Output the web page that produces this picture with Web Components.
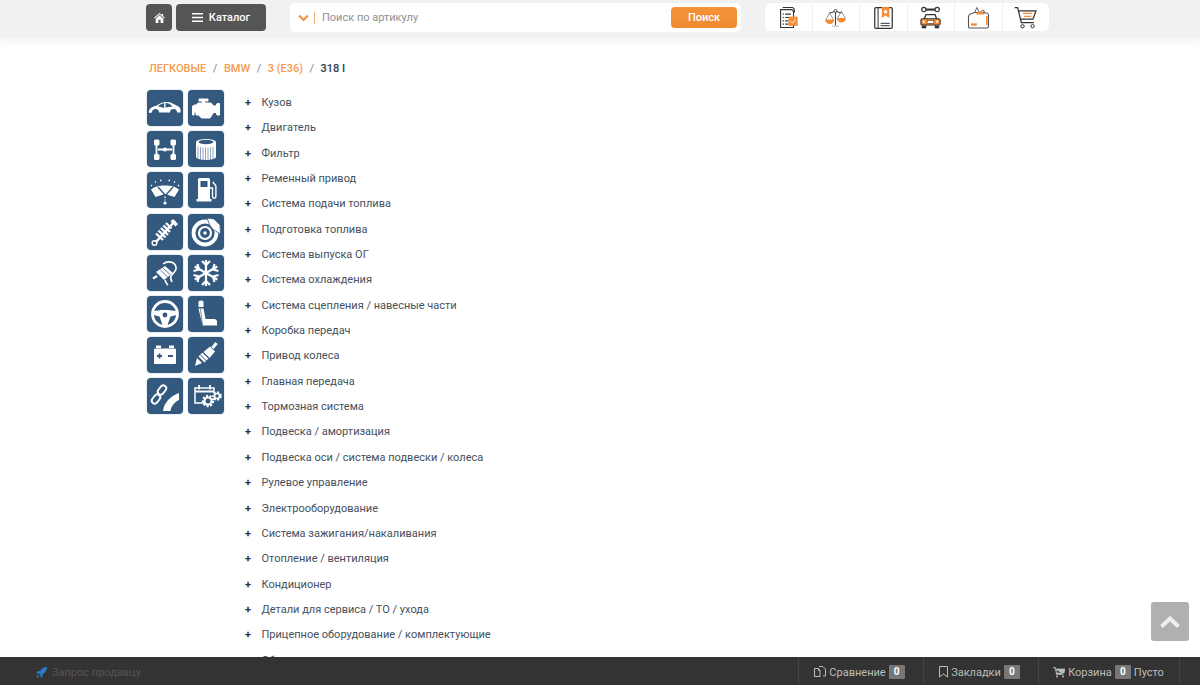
<!DOCTYPE html>
<html lang="ru">
<head>
<meta charset="utf-8">
<title>Каталог</title>
<style>
  html, body { margin: 0; height: 685px; overflow: hidden; background: #fff; font-family: Roboto, sans-serif; }
</style>
</head>
<body>
<site-header></site-header>
<main-page>
  <bread-crumbs></bread-crumbs>
  <category-tiles></category-tiles>
  <parts-list></parts-list>
</main-page>
<scroll-top></scroll-top>
<bottom-bar></bottom-bar>

<script>
const ORANGE = '#f48d37';

// top toolbar icons, 30x30
const TOOL_ICONS = {
  list: `<path d="M8 3h12l2 2v4M5.500 5.500H19l2 2V27H5.500z" fill="#fff" stroke="#333" stroke-width="1.300"/><path d="M8 11h1.500M11 11h7M8 15h1.500M11 15h5M8 19h1.500M11 19h4M8 23h1.500M11 23h4" stroke="#333" stroke-width="1.400"/><rect x="15" y="14" width="11" height="11" fill="${ORANGE}"/><path d="M17.500 19.500l2.300 2.300 4-4.800" stroke="#fff" stroke-width="1" fill="none"/>`,
  scales: `<path d="M15 7v17M8 9.500l7-2 7 2" stroke="#444" stroke-width="1.300" fill="none"/><circle cx="15" cy="7" r="1.700" fill="#fff" stroke="#333"/><path d="M8 9.500l-4.500 8M8 9.500l4.500 8M22 7.500l-4.500 8M22 7.500l4.500 8" stroke="#444" stroke-width=".7"/><path d="M2.500 17.500h11a5.500 5.500 0 0 1-11 0zM16.500 15.500h11a5.500 5.500 0 0 1-11 0z" fill="${ORANGE}"/><path d="M11 24.500h8v1.500h-8z" fill="#bbb"/>`,
  book: `<rect x="4.500" y="3" width="21" height="25" rx="1.500" fill="#fff" stroke="#333" stroke-width="1.500"/><path d="M8.500 3v25M11.500 22h11M11.500 24.800h11" stroke="#333" stroke-width="1.200"/><path d="M13 2.500h9v13l-4.500-3-4.500 3z" fill="${ORANGE}"/><path d="M17.500 5l.9 1.900 2 .2-1.500 1.400.4 2-1.800-1-1.800 1 .4-2-1.500-1.400 2-.2z" fill="#fff"/>`,
  car: `<path d="M9 5.500h12" stroke="#333" stroke-width="2.500"/><circle cx="7" cy="5.500" r="2.600" fill="#fff" stroke="#333" stroke-width="1.400"/><circle cx="23" cy="5.500" r="2.600" fill="#fff" stroke="#333" stroke-width="1.400"/><path d="M7.500 17l2-5.500h11l2 5.500" fill="#fff" stroke="#333" stroke-width="1.500"/><rect x="3.500" y="16.500" width="23" height="7.500" rx="1.500" fill="${ORANGE}" stroke="#333" stroke-width="1.300"/><rect x="11" y="18.500" width="8" height="3.500" fill="#fff" stroke="#333" stroke-width=".6"/><path d="M5 24.500v3h4.500v-3M20.500 24.500v3H25v-3" fill="#333" stroke="#333"/><circle cx="7" cy="20" r="1.300" fill="#fff"/><circle cx="23" cy="20" r="1.300" fill="#fff"/>`,
  box: `<path d="M10 10l3-7 3 6M16 9l5-3 2 5" stroke="#666" stroke-width="1.200" fill="none"/><path d="M3 14q0-2 2-3l5-2h10q7 0 7 3v14q0 1.500-1.500 1.500h-21Q3 27.500 3 26z" fill="#fff" stroke="#555" stroke-width="1.300"/><path d="M13 9.500q4-4 8 0l1.500 2H12z" fill="${ORANGE}"/><rect x="6" y="22" width="7" height="2.800" fill="${ORANGE}"/><rect x="24" y="13" width="2" height="11" fill="${ORANGE}"/>`,
  cart: `<path d="M2 3h3.500l4.500 18h15M6.500 7h21l-3.500 10H9.500" fill="#fff" stroke="#333" stroke-width="1.500"/><path d="M12 10h11M13 13.500h9" stroke="${ORANGE}" stroke-width="1.500"/><circle cx="11.500" cy="25.500" r="2" fill="none" stroke="#333" stroke-width="1.200"/><circle cx="23.500" cy="25.500" r="2" fill="none" stroke="#333" stroke-width="1.200"/>`
};

// category tile icons, 36x36, white on blue
const B = '#33597f';
const TILE_ICONS = {
  car: `<path d="M2 23c-.5-4 2-6 8-7.500 3-2.500 7-4 11-3.500 3.500.5 6 2.500 8.500 3.500 3 1 4.500 3 4 7h-3.500a3.500 3.500 0 0 0-7 0H12a3.500 3.500 0 0 0-7 0z" fill="#fff"/><path d="M11 16.200c2-1.800 4.200-2.800 6.300-3l-.2 4.800zM18.600 13c3 0 5.300 1.600 7 3.600l-7.100 1z" fill="${B}"/>`,
  engine: `<path d="M6 15h2.500l1.500-2h4.500v-2H11V9h9v2h-3.500v2H23l2.500 3H28l1-2.500h2.500V25H29l-1-2.500h-2.500L22 28H13.500L10.500 25H8v-3H6v3H4.500v-9H6z" fill="#fff" stroke="#fff" stroke-linejoin="round"/>`,
  chassis: `<g fill="none" stroke="#fff"><path d="M9.500 11v15M26.500 11v15M11 18.500h14" stroke-width="1.800"/><rect x="7.500" y="9" width="4.500" height="5" rx=".5" fill="#fff" stroke-width="1"/><rect x="24" y="9" width="4.500" height="5" rx=".5" fill="#fff" stroke-width="1"/><rect x="7.500" y="23.500" width="4.500" height="5" rx=".5" fill="#fff" stroke-width="1"/><rect x="24" y="23.500" width="4.500" height="5" rx=".5" fill="#fff" stroke-width="1"/></g><circle cx="18" cy="18.500" r="2" fill="#fff"/>`,
  filter: `<path d="M8 11c1-4 19-4 20 0v15c-1 4-19 4-20 0z" fill="#fff"/><ellipse cx="18" cy="11" rx="7.500" ry="2.200" fill="${B}"/><path d="M10 15.500v12M12.500 16v12.500M15 16.500v12.500M17.500 16.500V29M20 16.500V29M22.500 16.500V29M25 16v12.500" stroke="${B}" stroke-opacity=".55" stroke-width="1"/>`,
  wiper: `<path d="M4 17.500C10 12 26 12 32 17.500l-4.500 7.500-9.500-3-9.500 3z" fill="#fff"/><path d="M18 23l-7-8M19 23l7-8" stroke="${B}" stroke-width="1.400"/><path d="M4 14l1-1M8 10.500l1-1M13 8.500h1.500M21.500 8.500H23M27 9.500l1 1M31 13l1 1M18 24.500v1.500M18 27.500v1" stroke="#fff" stroke-width="1.300"/><circle cx="18" cy="31" r="1.600" fill="#fff"/>`,
  fuel: `<path d="M10 7.500q0-1.500 1.500-1.500h9Q22 6 22 7.500V27h1.500v2.500h-15V27H10z" fill="#fff"/><rect x="12.500" y="9" width="7" height="6" fill="${B}"/><path d="M22 16h2.500v8.500a1.700 1.700 0 0 0 3.400 0V14l-3-4" fill="none" stroke="#fff" stroke-width="1.400"/>`,
  shock: `<path d="M8 29L28 7" stroke="#fff" stroke-width="2.500"/><circle cx="7.500" cy="29" r="2.300" fill="${B}" stroke="#fff" stroke-width="1.500"/><path d="M26 5l5 5-2.500 2.500-5-5z" fill="#fff"/><path d="M9 19.500l7 6.500M11.500 16.500l7 7M14 14l7 7M16.500 11.500l6.500 6.500M19 9l5.500 5.500" stroke="#fff" stroke-width="2.300"/>`,
  brake: `<circle cx="17" cy="19" r="11.500" fill="none" stroke="#fff" stroke-width="3.800"/><circle cx="17" cy="19" r="6" fill="none" stroke="#fff" stroke-width="2.200"/><circle cx="17" cy="19" r="1.800" fill="#fff"/><path d="M19 4l7 1 6 6 .5 9-7.500-4.500-3-4z" fill="#fff" stroke="${B}" stroke-width=".8"/>`,
  exhaust: `<path d="M9 17l9-6 8 7-9 7z" fill="#fff"/><path d="M13 14.500l7.500 7.500M15.500 12.800l8 7" stroke="${B}" stroke-width=".8"/><path d="M10 21l-4 2.500" stroke="#fff" stroke-width="2.200"/><path d="M16 9c5-4 12-2 13 3 1 4-3 6-5 9-1 2 0 4 1 6M18 25c1 2 1 4 3 5" fill="none" stroke="#fff" stroke-width="1.600"/>`,
  snow: `<g stroke="#fff" stroke-width="2.200" fill="none"><path d="M18 5v26M6.700 11.500l22.600 13M6.700 24.500l22.600-13"/><path d="M14 6l4 4 4-4M14 30l4-4 4 4M5.500 16l5.500-1.500L9.500 9M30.500 20L25 21.500l1.500 5.500M5.500 20l5.500 1.500L9.500 27M30.500 16L25 14.500 26.500 9"/></g>`,
  wheel: `<circle cx="18" cy="18" r="12.500" fill="none" stroke="#fff" stroke-width="2.800"/><path d="M6 15.500c5-2 19-2 24 0l-.5 3.500-6 1.500-3 8.500h-5l-3-8.500-6-1.500z" fill="#fff"/><circle cx="18" cy="19" r="2.400" fill="${B}"/>`,
  seat: `<path d="M10.500 5.500q2.500-2 5 0V11h-5zM10.500 12.500h5L17.500 23H26q3 0 3 3v3.500H14.500z" fill="#fff"/><path d="M14.500 29l-2-16" stroke="${B}" stroke-width=".7"/>`,
  battery: `<rect x="7" y="11.500" width="22" height="15.500" rx="1" fill="#fff"/><rect x="9" y="8.500" width="5" height="2.500" fill="#fff"/><rect x="22" y="8.500" width="5" height="2.500" fill="#fff"/><path d="M10 19h5M12.500 16.500v5M21 19h5" stroke="${B}" stroke-width="1.800"/>`,
  plug: `<path d="M7 29l2-8 5 5z" fill="#fff"/><path d="M10.500 19.500l6 6 4-4-6-6z" fill="#fff"/><path d="M15.500 15l6 6 5.500-6.500-5-5z" fill="#fff"/><path d="M24.500 11l4-5" stroke="#fff" stroke-width="3"/><path d="M12.500 18l6 6M15 15.500l6 6" stroke="${B}" stroke-width="1"/>`,
  chain: `<g fill="none" stroke="#fff" stroke-width="1.900"><rect x="6" y="16" width="6" height="10" rx="3" transform="rotate(38 9 21)"/><rect x="12" y="7" width="6" height="10" rx="3" transform="rotate(38 15 12)"/></g><path d="M16 33c1-9 8-15 16-18v7c-4 2-8 6-8.500 11z" fill="#fff"/>`,
  service: `<path d="M16 25H7V10h19v5" fill="none" stroke="#fff" stroke-width="1.500"/><path d="M7 13.500h19M11 7v4.500M22 7v4.500" stroke="#fff" stroke-width="1.800"/><g fill="none" stroke="#fff" stroke-dasharray="2 1.500"><circle cx="20" cy="23" r="5" stroke-width="2.500"/><circle cx="29" cy="18" r="3.800" stroke-width="2"/></g><circle cx="20" cy="23" r="3.500" fill="none" stroke="#fff" stroke-width="2"/><circle cx="29" cy="18" r="2.500" fill="none" stroke="#fff" stroke-width="1.600"/>`
};

const TILES = ['car', 'engine', 'chassis', 'filter', 'wiper', 'fuel', 'shock', 'brake', 'exhaust', 'snow', 'wheel', 'seat', 'battery', 'plug', 'chain', 'service'];

const PARTS = [
  'Кузов', 'Двигатель', 'Фильтр', 'Ременный привод', 'Система подачи топлива', 'Подготовка топлива',
  'Система выпуска ОГ', 'Система охлаждения', 'Система сцепления / навесные части', 'Коробка передач',
  'Привод колеса', 'Главная передача', 'Тормозная система', 'Подвеска / амортизация',
  'Подвеска оси / система подвески / колеса', 'Рулевое управление', 'Электрооборудование',
  'Система зажигания/накаливания', 'Отопление / вентиляция', 'Кондиционер',
  'Детали для сервиса / ТО / ухода', 'Прицепное оборудование / комплектующие', 'Оборудование'
];

class SiteHeader extends HTMLElement {
  constructor() {
    super();
    const tools = Object.keys(TOOL_ICONS)
      .map((k) => `<a class="tool"><svg width="25" height="25" viewBox="0 0 30 30">${TOOL_ICONS[k]}</svg></a>`)
      .join('');
    this.attachShadow({ mode: 'open' }).innerHTML = `
      <style>
        :host {
          display: flex;
          align-items: flex-start;
          height: 38px;
          padding: 3px 0 0 146px;
          box-sizing: border-box;
          background: #f1f1f1;
          box-shadow: 0 2px 10px rgba(0, 0, 0, .07);
          font: 11px Roboto, sans-serif;
        }
        .btn {
          display: flex;
          align-items: center;
          justify-content: center;
          height: 27px;
          margin-top: 1px;
          background: #555;
          color: #fff;
          border-radius: 4px;
          font-weight: 500;
        }
        .home { width: 26px; }
        .catalog { width: 90px; margin-left: 4px; gap: 6px; box-sizing: border-box; }
        .search {
          display: flex;
          align-items: center;
          width: 451px;
          height: 29px;
          margin-left: 24px;
          padding: 0 4px 0 8px;
          box-sizing: border-box;
          background: #fff;
          border-radius: 5px;
          color: #8f8f8f;
        }
        .sep { width: 1px; height: 12px; background: #f6b27a; margin: 0 7px 0 5px; }
        .hint { flex: 1; }
        .go {
          width: 66px;
          height: 21px;
          display: flex;
          align-items: center;
          justify-content: center;
          background: linear-gradient(#f69339, #ef8a31);
          border-radius: 4px;
          color: #fff;
          font-weight: 500;
        }
        .tools {
          display: flex;
          width: 284px;
          height: 28px;
          margin-left: 24px;
          background: #fff;
          border-radius: 6px;
        }
        .tool {
          flex: 1;
          display: flex;
          align-items: center;
          justify-content: center;
          border-left: 1px solid #eef0f3;
        }
        .tool:first-child { border-left: 0; }
      </style>
      <a class="btn home"><svg width="11" height="10" viewBox="0 0 12 11"><path d="M6 0L0 5.300l.7.800L6 1.500l5.300 4.600.7-.8-2-1.800V1H8.500v1.100zM1.800 6.200V11h3V7.500h2.400V11h3V6.200L6 2.600z" fill="#fff"/></svg></a>
      <a class="btn catalog"><svg width="11" height="9" viewBox="0 0 11 9"><path d="M0 0h11v1.500H0zM0 3.700h11v1.500H0zM0 7.500h11V9H0z" fill="#fff"/></svg>Каталог</a>
      <div class="search">
        <svg width="11" height="8" viewBox="0 0 11 8"><path d="M1 1.500l4.500 4.500L10 1.500" fill="none" stroke="${ORANGE}" stroke-width="2"/></svg>
        <span class="sep"></span>
        <span class="hint">Поиск по артикулу</span>
        <a class="go">Поиск</a>
      </div>
      <div class="tools">${tools}</div>`;
  }
}

class MainPage extends HTMLElement {
  constructor() {
    super();
    this.attachShadow({ mode: 'open' }).innerHTML = `
      <style>
        :host {
          display: grid;
          grid-template-columns: 98px 1fr;
          padding: 23px 0 0 147px;
        }
        ::slotted(bread-crumbs) { grid-column: 1 / 3; }
      </style>
      <slot></slot>`;
  }
}

class BreadCrumbs extends HTMLElement {
  constructor() {
    super();
    const crumbs = ['ЛЕГКОВЫЕ', 'BMW', '3 (E36)'].map((t) => `<a>${t}</a><i>/</i>`).join('');
    this.attachShadow({ mode: 'open' }).innerHTML = `
      <style>
        :host {
          display: block;
          height: 22px;
          padding-left: 2px;
          margin-bottom: 7px;
          font: 500 11px/16px Roboto, sans-serif;
          color: #2d3a4a;
        }
        a { color: #f59a4d; }
        i { font-style: normal; font-weight: 400; color: #7a8490; margin: 0 6.500px; }
      </style>
      ${crumbs}<b style="font-weight:500">318 I</b>`;
  }
}

class CategoryTiles extends HTMLElement {
  constructor() {
    super();
    const tiles = TILES.map((k) => `<a><svg width="36" height="36" viewBox="0 0 36 36">${TILE_ICONS[k]}</svg></a>`).join('');
    this.attachShadow({ mode: 'open' }).innerHTML = `
      <style>
        :host {
          display: grid;
          grid-template-columns: 36px 36px;
          grid-auto-rows: 36px;
          column-gap: 5px;
          row-gap: 5.200px;
          align-content: start;
        }
        a {
          display: block;
          width: 36px;
          height: 36px;
          background: ${B};
          border-radius: 4px;
          box-shadow: 0 0 0 1px #e9ecf0;
        }
        svg { display: block; }
      </style>
      ${tiles}`;
  }
}

class PartsList extends HTMLElement {
  constructor() {
    super();
    const rows = PARTS.map((t) => `<li>${t}</li>`).join('');
    this.attachShadow({ mode: 'open' }).innerHTML = `
      <style>
        :host {
          display: block;
          font: 11px/25.350px Roboto, sans-serif;
          color: #44505c;
        }
        ul { list-style: none; margin: 0; padding: 0 0 0 16.500px; }
        li { position: relative; }
        li::before {
          content: "+";
          position: absolute;
          left: -16.500px;
          font-weight: 700;
          color: #333;
        }
      </style>
      <ul>${rows}</ul>`;
  }
}

class ScrollTop extends HTMLElement {
  constructor() {
    super();
    this.attachShadow({ mode: 'open' }).innerHTML = `
      <style>
        :host {
          position: fixed;
          left: 1151px;
          top: 602px;
          width: 38px;
          height: 39px;
          display: flex;
          align-items: center;
          justify-content: center;
          background: #b0b0b0;
          border-radius: 3px;
        }
      </style>
      <svg width="22" height="14" viewBox="0 0 22 14"><path d="M2.500 11.500L11 3.500l8.500 8" fill="none" stroke="#eee" stroke-width="4"/></svg>`;
  }
}

class BottomBar extends HTMLElement {
  constructor() {
    super();
    this.attachShadow({ mode: 'open' }).innerHTML = `
      <style>
        :host {
          position: fixed;
          left: 0;
          right: 0;
          bottom: 0;
          height: 28px;
          display: flex;
          background: #333;
          font: 11px Roboto, sans-serif;
          color: #bdbdbd;
        }
        .ask {
          flex: 1;
          display: flex;
          align-items: center;
          gap: 5px;
          padding: 2px 0 0 36px;
          color: #555;
        }
        .sec {
          display: flex;
          align-items: center;
          justify-content: center;
          gap: 3px;
          box-sizing: border-box;
          padding-top: 2px;
          border-left: 1px solid #444;
        }
        .cmp { width: 125px; padding-right: 3px; }
        .fav { width: 115px; padding-right: 3px; }
        .cart { width: 142px; padding-right: 1px; border-right: 1px solid #444; margin-right: 20px; }
        b {
          display: inline-block;
          width: 16px;
          height: 14px;
          background: #777;
          color: #fff;
          font: 700 10px/14px Roboto, sans-serif;
          text-align: center;
          border-radius: 1px;
        }
      </style>
      <div class="ask">
        <svg width="11" height="11" viewBox="0 0 11 11"><path d="M11 0C8 0 5.500 1.500 4 4L1.500 4.300 0 6.500l2.500-.3L4.800 8.500 4.500 11l2.200-1.500L7 7c2.500-1.500 4-4 4-7zM2 8c-1 .5-1.500 1.500-1.500 2.500C1.500 10.500 2.500 10 3 9z" fill="#2a7bc2"/></svg>
        <span>Запрос продавцу</span>
      </div>
      <div class="sec cmp"><svg width="12" height="13" viewBox="0 0 12 13"><path d="M.5 2.500h4l1.500 2v6H.500zM5 .5h3.500L11.500 3v7H9M4.500 2.500v2H6" fill="none" stroke="#bdbdbd"/></svg><span>Сравнение</span><b>0</b></div>
      <div class="sec fav"><svg width="9" height="12" viewBox="0 0 9 12"><path d="M.5.500h8v10.500L4.500 8 .500 11z" fill="none" stroke="#bdbdbd"/></svg><span>Закладки</span><b>0</b></div>
      <div class="sec cart"><svg width="12" height="11" viewBox="0 0 12 11"><path d="M0 .5h2.300L3.500 7.500h7M3 2h9l-1 4H3.500z" fill="#bdbdbd" stroke="#bdbdbd" stroke-width=".7"/><circle cx="4" cy="9.500" r="1" fill="#bdbdbd"/><circle cx="10" cy="9.500" r="1" fill="#bdbdbd"/></svg><span>Корзина</span><b>0</b><span>Пусто</span></div>`;
  }
}

customElements.define('site-header', SiteHeader);
customElements.define('main-page', MainPage);
customElements.define('bread-crumbs', BreadCrumbs);
customElements.define('category-tiles', CategoryTiles);
customElements.define('parts-list', PartsList);
customElements.define('scroll-top', ScrollTop);
customElements.define('bottom-bar', BottomBar);
</script>
</body>
</html>
